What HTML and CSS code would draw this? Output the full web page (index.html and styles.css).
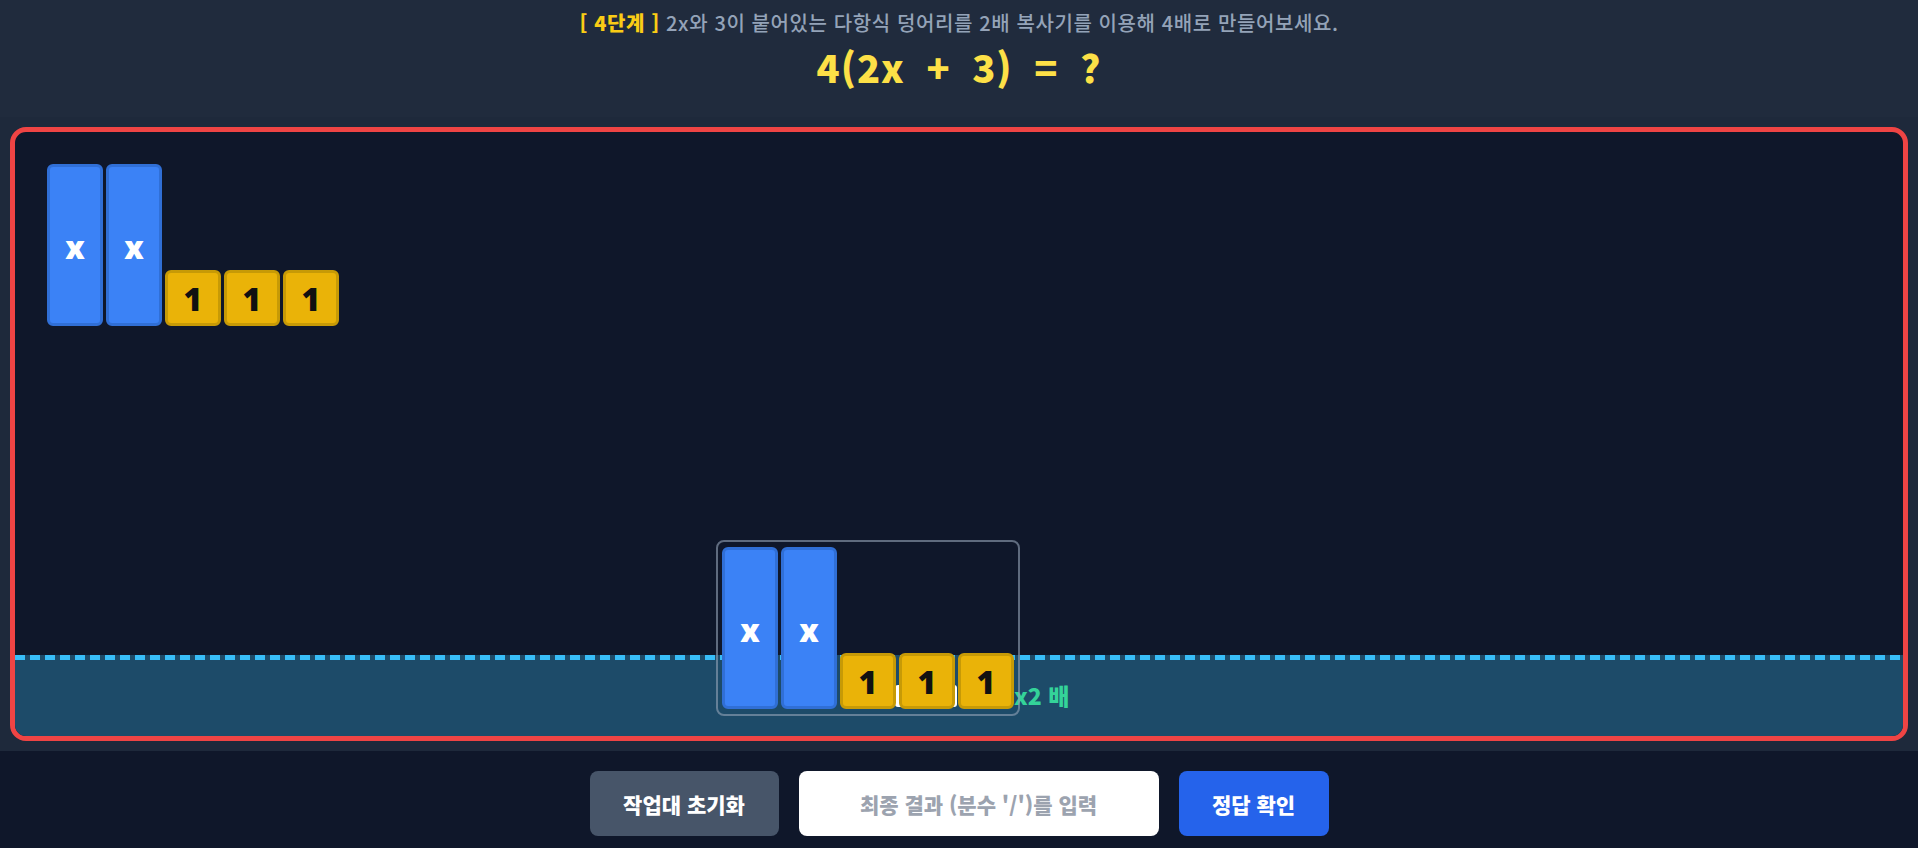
FILE: index.html
```html
<!DOCTYPE html>
<html lang="ko">
<head>
  <meta charset="UTF-8" />
  <title>대수 타일 - 4단계</title>
  <link rel="stylesheet" href="styles.css">
</head>
<body>

<div class="header">
  <div class="mission"><span class="step">[ 4단계 ]</span> 2x와 3이 붙어있는 다항식 덩어리를 2배 복사기를 이용해 4배로 만들어보세요.</div>
  <div class="problem">4(2x + 3) = ?</div>
</div>

<div class="board-wrap">
  <div class="board">
    <div class="canvas">
      <!-- original chunk -->
      <div class="group" style="left: 32px; top: 32px;">
        <div class="tile tile-x">x</div>
        <div class="tile tile-x">x</div>
        <div class="tile tile-1">1</div>
        <div class="tile tile-1">1</div>
        <div class="tile tile-1">1</div>
      </div>
    </div>

    <!-- copier -->
    <div class="copier"></div>
    <div class="copier-slot"></div>
    <div class="copier-label">x2 배</div>

    <!-- chunk dropped on the copier -->
    <div class="group picked" style="left: 701px; top: 408px;">
      <div class="tile tile-x">x</div>
      <div class="tile tile-x">x</div>
      <div class="tile tile-1">1</div>
      <div class="tile tile-1">1</div>
      <div class="tile tile-1">1</div>
    </div>
  </div>
</div>

<div class="controls">
  <button class="btn reset">작업대 초기화</button>
  <input type="text" class="answer" placeholder="최종 결과 (분수 '/')를 입력" />
  <button class="btn check">정답 확인</button>
</div>

</body>
</html>
```

FILE: styles.css
```css
body {
  margin: 0;
  background: #0f172a;
  font-family: "Noto Sans CJK KR", "Noto Sans", sans-serif;
  font-weight: 700;
}

.header {
  height: 117px;
  box-sizing: border-box;
  padding-top: 9px;
  background: #202b3d;
  text-align: center;
}
.mission {
  font-size: 20px;
  line-height: 28px;
  font-weight: 500;
  color: #94a3b8;
  letter-spacing: 0.6px;
}
.step { color: #facc15; font-weight: 900; }
.problem {
  margin-top: 5px;
  font-size: 38px;
  line-height: 50px;
  font-weight: 900;
  color: #fde047;
  letter-spacing: 1px;
  word-spacing: 10px;
}

.board-wrap {
  background: #1e293b;
  padding: 10px;
}
.board {
  position: relative;
  height: 604px;
  border: 5px solid #ef4444;
  border-radius: 16px;
  background: #0f172a;
  overflow: hidden;
  display: flex;
  flex-direction: column;
}
.canvas {
  position: relative;
  flex: 1;
}
.copier {
  height: 81px;
  background:
    repeating-linear-gradient(90deg, #38bdf8 0 10px, transparent 10px 15px) top left / 100% 5px no-repeat,
    #1d4b69;
}
.copier-slot {
  position: absolute;
  left: 880px;
  top: 553px;
  width: 62px;
  height: 22px;
  background: #fff;
  border-radius: 3px;
}
.copier-label {
  position: absolute;
  left: 999px;
  top: 549px;
  font-size: 23px;
  line-height: 28px;
  font-weight: 900;
  color: #34d399;
}

.group {
  position: absolute;
  display: flex;
  align-items: flex-end;
  gap: 3px;
}
.group.picked {
  padding: 5px 4px;
  border: 2px solid rgba(148, 163, 184, 0.6);
  border-radius: 8px;
}
.tile {
  width: 56px;
  box-sizing: border-box;
  border: 3px solid;
  border-radius: 6px;
  display: flex;
  align-items: center;
  justify-content: center;
  font-family: "Noto Sans", sans-serif;
  font-weight: 900;
}
.tile-x {
  height: 162px;
  background: #3b82f6;
  border-color: #306fd6;
  color: #fff;
  font-size: 31px;
  padding-top: 4px;
}
.tile-1 {
  height: 56px;
  background: #eab308;
  border-color: #c79a06;
  color: #111;
  font-size: 32px;
}

.controls {
  height: 97px;
  box-sizing: border-box;
  padding-top: 20px;
  display: flex;
  justify-content: center;
  align-items: flex-start;
  gap: 20px;
}
.btn, .answer {
  height: 65px;
  border: none;
  border-radius: 8px;
  font-family: inherit;
  font-weight: 900;
  font-size: 21px;
}
.btn {
  color: #fff;
  cursor: pointer;
}
.reset { width: 189px; background: #475569; }
.check { width: 150px; background: #2563eb; }
.answer {
  width: 360px;
  box-sizing: border-box;
  background: #fff;
  text-align: center;
  color: #111;
}
.answer::placeholder { color: #9ca3af; }
```
